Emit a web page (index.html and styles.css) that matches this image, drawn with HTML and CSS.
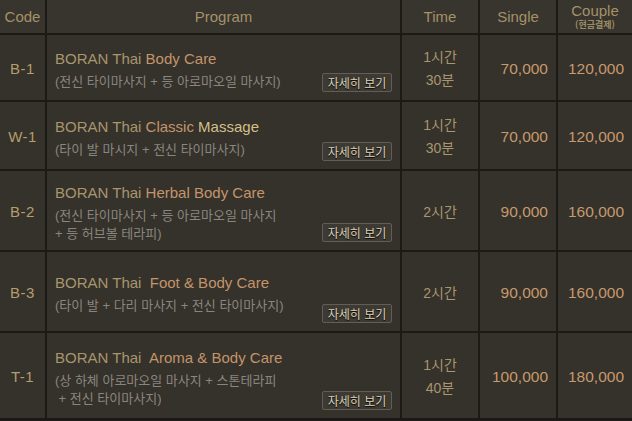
FILE: index.html
```html
<!DOCTYPE html>
<html lang="ko">
<head>
<meta charset="utf-8">
<title>BORAN Thai Program</title>
<link rel="stylesheet" href="styles.css">
</head>
<body>
<div class="table">
  <div class="row head">
    <div class="cell">Code</div>
    <div class="cell">Program</div>
    <div class="cell">Time</div>
    <div class="cell">Single</div>
    <div class="cell couple-h"><span>Couple</span><small>(현금결제)</small></div>
  </div>

  <div class="row r1">
    <div class="cell code">B-1</div>
    <div class="cell prog">
      <div class="ptext">
        <div class="title">BORAN Thai <em>Body Care</em></div>
        <div class="desc">(전신 타이마사지 + 등 아로마오일 마사지)</div>
      </div>
      <button class="more" type="button">자세히 보기</button>
    </div>
    <div class="cell time">1시간<br>30분</div>
    <div class="cell price">70,000</div>
    <div class="cell price">120,000</div>
  </div>

  <div class="row r2">
    <div class="cell code">W-1</div>
    <div class="cell prog">
      <div class="ptext">
        <div class="title">BORAN Thai <em>Classic</em> <strong>Massage</strong></div>
        <div class="desc">(타이 발 마시지 + 전신 타이마사지)</div>
      </div>
      <button class="more" type="button">자세히 보기</button>
    </div>
    <div class="cell time">1시간<br>30분</div>
    <div class="cell price">70,000</div>
    <div class="cell price">120,000</div>
  </div>

  <div class="row r3">
    <div class="cell code">B-2</div>
    <div class="cell prog">
      <div class="ptext">
        <div class="title">BORAN Thai <em>Herbal Body Care</em></div>
        <div class="desc">(전신 타이마사지 + 등 아로마오일 마사지<br>+ 등 허브볼 테라피)</div>
      </div>
      <button class="more" type="button">자세히 보기</button>
    </div>
    <div class="cell time">2시간</div>
    <div class="cell price">90,000</div>
    <div class="cell price">160,000</div>
  </div>

  <div class="row r4">
    <div class="cell code">B-3</div>
    <div class="cell prog">
      <div class="ptext">
        <div class="title">BORAN Thai&nbsp; <em>Foot &amp; Body Care</em></div>
        <div class="desc">(타이 발 + 다리 마사지 + 전신 타이마사지)</div>
      </div>
      <button class="more" type="button">자세히 보기</button>
    </div>
    <div class="cell time">2시간</div>
    <div class="cell price">90,000</div>
    <div class="cell price">160,000</div>
  </div>

  <div class="row r5">
    <div class="cell code">T-1</div>
    <div class="cell prog">
      <div class="ptext">
        <div class="title">BORAN Thai&nbsp; <em>Aroma &amp; Body Care</em></div>
        <div class="desc">(상 하체 아로마오일 마사지 + 스톤테라피<br>&nbsp;+ 전신 타이마사지)</div>
      </div>
      <button class="more" type="button">자세히 보기</button>
    </div>
    <div class="cell time">1시간<br>40분</div>
    <div class="cell price">100,000</div>
    <div class="cell price">180,000</div>
  </div>
</div>
</body>
</html>
```

FILE: styles.css
```css
html, body {
  margin: 0;
  padding: 0;
  background: #1e1b18;
}

body {
  font-family: "Liberation Sans", Arial, "Noto Sans CJK KR", sans-serif;
  width: 632px;
  height: 421px;
  overflow: hidden;
}

.table {
  display: flex;
  flex-direction: column;
  gap: 2px;
  background: #1c1a17;
  padding-bottom: 2px;
}

.row {
  display: grid;
  grid-template-columns: 45px 353px 76px 76px 1fr;
  column-gap: 2px;
}

.cell {
  background: #35312b;
  display: flex;
  align-items: center;
  justify-content: center;
  color: #a8966c;
  font-size: 14px;
}

.head { height: 33px; }
.head .cell {
  background: #38342e;
  font-size: 15px;
  color: #a39268;
}

.head .couple-h {
  flex-direction: column;
  justify-content: flex-start;
  padding-top: 3px;
}
.couple-h span {
  line-height: 16px;
}
.couple-h small {
  font-family: "Noto Sans CJK KR", sans-serif;
  font-size: 9px;
  font-weight: bold;
  line-height: 11px;
  color: #9c8c64;
}

.r1 { height: 65px; }
.r2 { height: 67px; }
.r3 { height: 79px; }
.r4 { height: 79px; }
.r5 { height: 85px; }

.code {
  font-size: 15px;
  color: #b39e6c;
  letter-spacing: 0.5px;
  padding-top: 2px;
}

.prog {
  justify-content: space-between;
  align-items: stretch;
  padding: 0 8px 0 8px;
}

.ptext {
  align-self: center;
  padding-top: 6px;
}

.title {
  font-size: 15px;
  line-height: 18px;
  color: #a8966c;
  margin-bottom: 5px;
}
.title em {
  font-style: normal;
  color: #c3956a;
}
.title strong {
  font-weight: normal;
  color: #d3bf88;
}

.desc {
  font-family: "Liberation Sans", "Noto Sans CJK KR", sans-serif;
  font-size: 13px;
  line-height: 18px;
  color: #8a867f;
}

.more {
  align-self: flex-end;
  margin-bottom: 8px;
  width: 70px;
  height: 19px;
  padding: 0;
  background: #3d3933;
  border: 1px solid #625d55;
  border-radius: 2px;
  color: #ddd3b8;
  font-family: "Noto Sans CJK KR", sans-serif;
  font-size: 12px;
  line-height: 17px;
  text-shadow: 0 1px 1px #000;
  white-space: nowrap;
}

.time {
  text-align: center;
  line-height: 23px;
  padding-top: 3px;
  color: #a8966e;
  font-family: "Liberation Sans", "Noto Sans CJK KR", sans-serif;
}

.price {
  justify-content: flex-end;
  padding-right: 8px;
  font-size: 15.5px;
  color: #c79a6c;
  padding-top: 2px;
}
```
